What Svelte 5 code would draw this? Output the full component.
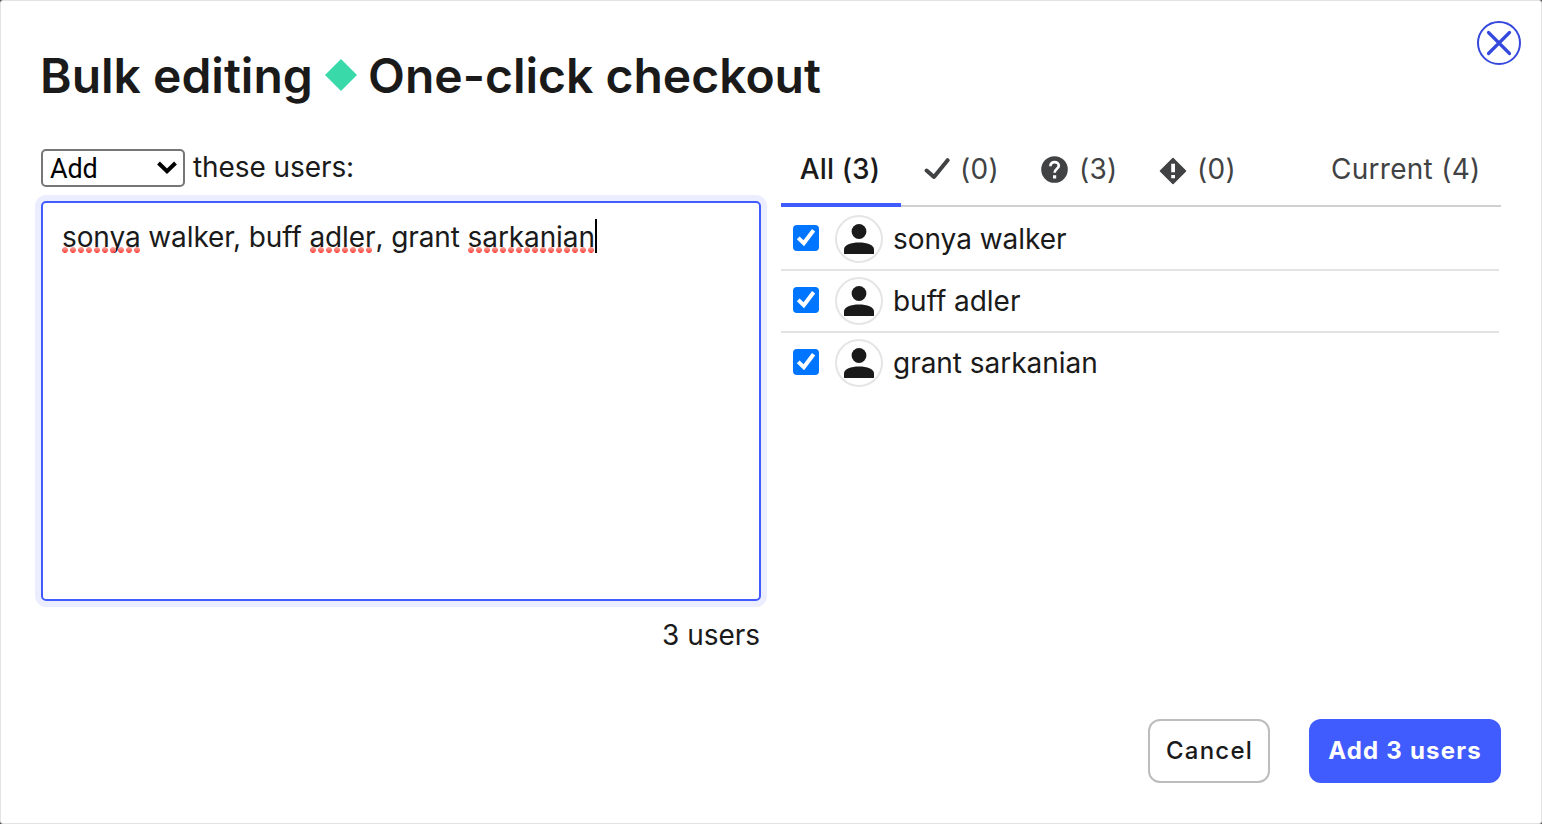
<script>
  const users = ['sonya walker', 'buff adler', 'grant sarkanian'];
  let checked = $state([true, true, true]);
</script>

<div class="dialog">
  <header>
    <h1>
      <span class="verb">Bulk editing</span>
      <svg class="diamond" width="32" height="32" viewBox="0 0 32 32"><path d="M16 0 32 16 16 32 0 16Z" fill="#39d9a9" /></svg>
      <span class="feature">One-click checkout</span>
    </h1>
    <button class="close" aria-label="Close">
      <svg width="44" height="44" viewBox="0 0 44 44" fill="none" stroke="#3548dc">
        <circle cx="22" cy="22" r="21" stroke-width="2" />
        <path d="M11.5 11.5 32.5 32.5M32.5 11.5 11.5 32.5" stroke-width="3.2" stroke-linecap="round" />
      </svg>
    </button>
  </header>

  <main>
    <section class="editor">
      <div class="action">
        <div class="select">
          <span>Add</span>
          <svg width="20" height="14" viewBox="0 0 20 14" fill="none" stroke="#000" stroke-width="4"><path d="M1.5 2 10 10.2 18.5 2" /></svg>
        </div>
        <span class="label">these users:</span>
      </div>
      <div class="input"><span class="typed"><span class="miss">sonya</span> walker, buff <span class="miss short">adler</span>, grant <span class="miss">sarkanian</span></span><i class="caret"></i></div>
      <div class="count">3 users</div>
    </section>

    <section class="results">
      <nav>
        <div class="tab active">All (3)</div>
        <div class="tab found">
          <svg width="26" height="22" viewBox="0 0 26 22" fill="none" stroke="#414243" stroke-width="4"><path d="M2.6 12.5 10 19 23.6 2.2" stroke-linejoin="round" stroke-linecap="round" /></svg>
          <span>(0)</span>
        </div>
        <div class="tab unknown">
          <svg width="27" height="27" viewBox="0 0 27 27">
            <circle cx="13.5" cy="13.5" r="13.3" fill="#414243" />
            <path d="M9.4 10.2C9.4 4.7 17.8 4.8 17.8 9.8C17.8 12.7 13.6 12.8 13.6 16.8" fill="none" stroke="#fff" stroke-width="2.7" />
            <path d="M12 19.2h3.2v3.2H12z" fill="#fff" />
          </svg>
          <span>(3)</span>
        </div>
        <div class="tab warned">
          <svg width="28" height="28" viewBox="0 0 28 28">
            <path d="M14 1.5 26.5 14 14 26.5 1.5 14Z" fill="#414243" stroke="#414243" stroke-width="1.6" stroke-linejoin="round" />
            <path d="M12.2 6.7h3.8v8.6h-3.8zM12.2 18h3.8v3.3h-3.8z" fill="#fff" />
          </svg>
          <span>(0)</span>
        </div>
        <div class="tab current">Current (4)</div>
      </nav>
      <ul>
        {#each users as user, i}
          <li>
            <button class="check" aria-label={user} onclick={() => (checked[i] = !checked[i])}>
              <svg width="26" height="26" viewBox="0 0 26 26">
                <rect width="26" height="26" rx="4" fill="#0075ff" />
                {#if checked[i]}<path d="M5.2 12.9 10.8 18.2 20.6 5.2" fill="none" stroke="#fff" stroke-width="4" />{/if}
              </svg>
            </button>
            <span class="avatar">
              <svg width="30" height="30" viewBox="0 0 30 30" fill="#1a1a1a">
                <circle cx="15" cy="7.5" r="7.4" />
                <path d="M0 30V25.5C0 21 7 18.6 15 18.6S30 21 30 25.5V30Z" />
              </svg>
            </span>
            <span class="name">{user}</span>
          </li>
        {/each}
      </ul>
    </section>
  </main>

  <footer>
    <button class="cancel">Cancel</button>
    <button class="submit">Add 3 users</button>
  </footer>
</div>

<style>
  :global(body) { background: #555; }
  * { box-sizing: border-box; }
  .dialog {
    width: 1542px; height: 824px; border: 1px solid #e3e3e3; border-radius: 3px;
    background: #fff; color: #1a1a1a; padding: 0 40px;
    font: 28px/36px Inter, sans-serif; letter-spacing: -0.03px;
    display: flex; flex-direction: column; overflow: hidden;
  }
  button { font-family: inherit; padding: 0; border: 0; background: none; display: block; }
  svg { display: block; flex: none; }
  header { height: 148px; display: flex; justify-content: space-between; margin-right: -20px; padding-top: 20px; }
  h1 { margin: 25px 0 0 -1px; height: 60px; font-size: 48px; line-height: 60px; font-weight: 600; letter-spacing: 0; display: flex; white-space: nowrap; }
  .verb { width: 285px; }
  .diamond { margin: 13px 11px 0 0; }
  .close { width: 44px; height: 44px; }
  main { display: flex; gap: 20px; height: 570px; }
  .editor { width: 720px; }
  .action { display: flex; height: 38px; align-items: center; gap: 8px; }
  .select {
    width: 144px; height: 38px; border: 2px solid #767676; border-radius: 5px;
    display: flex; align-items: center; justify-content: space-between; padding: 0 6px 0 7px;
    font-family: Roboto, sans-serif; font-size: 27px; letter-spacing: -0.2px; color: #000;
  }
  .select span { padding-top: 1px; }
  .label { letter-spacing: -0.08px; padding-bottom: 2px; }
  .input {
    height: 400px; margin-top: 14px; border: 2px solid #405cff; border-radius: 5px;
    box-shadow: 0 0 0 6px #eceeff; padding: 16px 19px; display: flex; white-space: nowrap;
  }
  .typed { letter-spacing: -0.1px; }
  .miss { position: relative; }
  .miss::after {
    content: ''; position: absolute; left: 0; right: 0; bottom: 1px; height: 6px;
    background: linear-gradient(#ffaaa5, #ff4038);
    mask: radial-gradient(circle at 3px 3px, #000 2.7px, transparent 3.2px) 0 0 / 8px 6px;
  }
  .short::after { right: 3px; left: 1px; }
  .caret { width: 2px; height: 34px; background: #000; }
  .count { text-align: right; margin: 16px 1px 0 0; }
  .results { width: 720px; }
  nav { display: flex; height: 58px; border-bottom: 2px solid #d0d0d0; color: #414243; letter-spacing: 0.28px; }
  .tab { display: flex; align-items: center; height: 58px; padding-bottom: 18px; white-space: nowrap; }
  .active { width: 120px; justify-content: center; border-bottom: 4px solid #405cff; padding: 0 2px 14px 0; color: #1a1a1a; font-weight: 500; letter-spacing: 0.1px; }
  .found { margin-left: 23px; gap: 10px; width: 117px; }
  .unknown { gap: 11px; width: 118px; }
  .warned { gap: 10px; width: 172px; }
  .warned svg { margin-top: 4px; }
  ul { list-style: none; margin: 0 2px 0 0; padding: 0; }
  li { display: flex; align-items: center; height: 62px; padding: 2px 0 0 12px; }
  li + li { border-top: 2px solid #e3e3e3; padding-top: 0; }
  .check { margin-top: -2px; }
  .avatar { width: 48px; height: 48px; margin: 0 10px 0 16px; border: 2px solid #e5e5e5; border-radius: 50%; display: grid; place-items: center; }
  footer { display: flex; justify-content: flex-end; gap: 39px; }
  .cancel, .submit { height: 64px; border-radius: 12px; font-size: 24px; padding-bottom: 2px; }
  .cancel { width: 122px; border: 2px solid #bdbdbd; color: #1a1a1a; font-weight: 500; letter-spacing: 1.2px; padding-left: 1px; }
  .submit { width: 192px; background: #405cff; color: #fff; font-weight: 700; letter-spacing: 1.2px; }
</style>
